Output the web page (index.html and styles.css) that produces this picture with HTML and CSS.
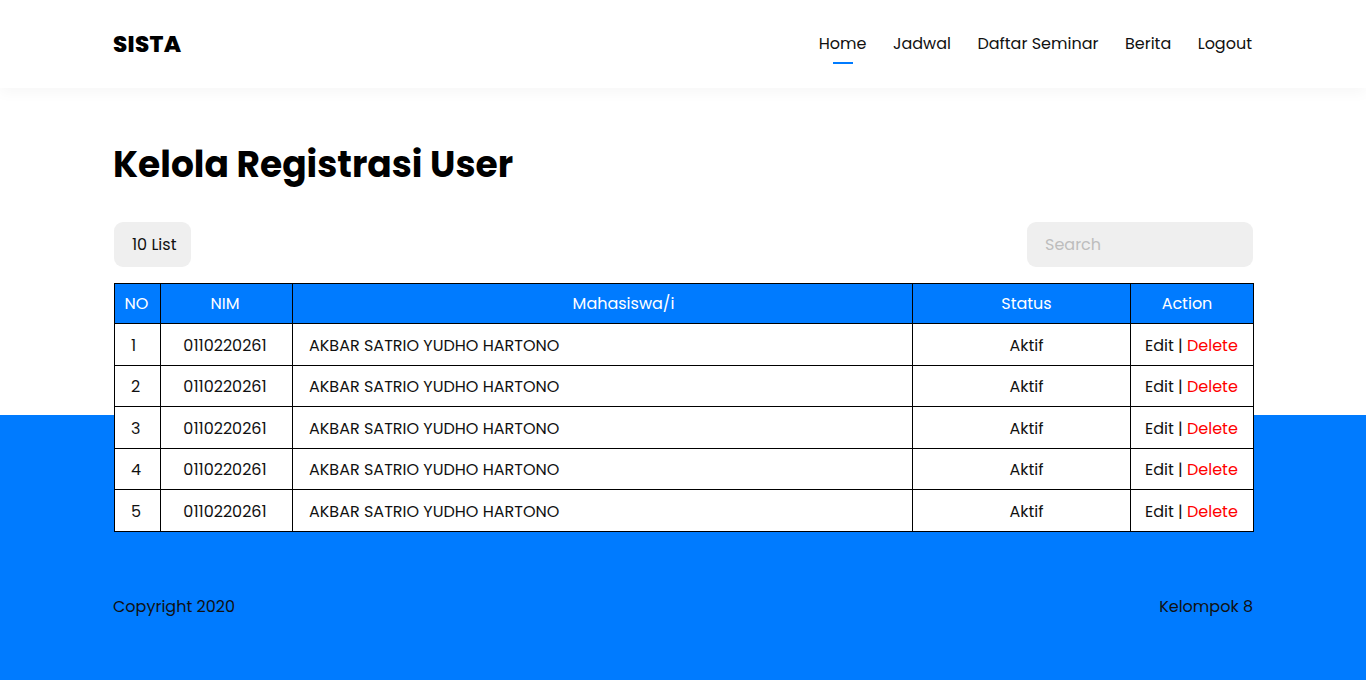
FILE: index.html
```html
<!DOCTYPE html>
<html lang="id">
<head>
<meta charset="utf-8">
<title>SISTA - Kelola Registrasi User</title>
<link rel="stylesheet" href="styles.css">
</head>
<body>
<header class="topbar">
  <div class="container topbar-inner">
    <div class="brand">SISTA</div>
    <nav class="nav">
      <a class="nav-link active" href="#">Home</a>
      <a class="nav-link" href="#">Jadwal</a>
      <a class="nav-link" href="#">Daftar Seminar</a>
      <a class="nav-link" href="#">Berita</a>
      <a class="nav-link" href="#">Logout</a>
    </nav>
  </div>
</header>
<main class="main">
  <div class="container">
    <h1 class="title">Kelola Registrasi User</h1>
    <div class="toolbar">
      <div class="list-btn">10 List</div>
      <input class="search" type="text" placeholder="Search">
    </div>
    <table class="grid">
      <colgroup>
        <col class="w-no"><col class="w-nim"><col class="w-name"><col class="w-status"><col class="w-action">
      </colgroup>
      <thead>
        <tr>
          <th class="c-no">NO</th>
          <th class="c-nim">NIM</th>
          <th class="c-name">Mahasiswa/i</th>
          <th class="c-status">Status</th>
          <th class="c-action">Action</th>
        </tr>
      </thead>
      <tbody>
        <tr><td class="c-no">1</td><td class="c-nim">0110220261</td><td class="c-name">AKBAR SATRIO YUDHO HARTONO</td><td class="c-status">Aktif</td><td class="c-action">Edit | <span class="del">Delete</span></td></tr>
        <tr><td class="c-no">2</td><td class="c-nim">0110220261</td><td class="c-name">AKBAR SATRIO YUDHO HARTONO</td><td class="c-status">Aktif</td><td class="c-action">Edit | <span class="del">Delete</span></td></tr>
        <tr><td class="c-no">3</td><td class="c-nim">0110220261</td><td class="c-name">AKBAR SATRIO YUDHO HARTONO</td><td class="c-status">Aktif</td><td class="c-action">Edit | <span class="del">Delete</span></td></tr>
        <tr><td class="c-no">4</td><td class="c-nim">0110220261</td><td class="c-name">AKBAR SATRIO YUDHO HARTONO</td><td class="c-status">Aktif</td><td class="c-action">Edit | <span class="del">Delete</span></td></tr>
        <tr><td class="c-no">5</td><td class="c-nim">0110220261</td><td class="c-name">AKBAR SATRIO YUDHO HARTONO</td><td class="c-status">Aktif</td><td class="c-action">Edit | <span class="del">Delete</span></td></tr>
      </tbody>
    </table>
    <footer class="footer">
      <span>Copyright 2020</span>
      <span>Kelompok 8</span>
    </footer>
  </div>
</main>
</body>
</html>
```

FILE: styles.css
```css
* { box-sizing: border-box; }
html, body { margin: 0; padding: 0; }
body {
  font-family: "Poppins", "Inter", "Noto Sans", sans-serif;
  color: #111;
  background: #007bff;
  height: 680px;
  overflow: hidden;
}
.container {
  width: 1140px;
  margin: 0 auto;
}
.topbar {
  background: #fff;
  height: 88px;
  box-shadow: 0 4px 14px rgba(0,0,0,0.04);
  position: relative;
  z-index: 2;
}
.topbar-inner {
  height: 88px;
  display: flex;
  align-items: center;
  justify-content: space-between;
}
.brand {
  font-size: 23px;
  font-weight: 800;
  letter-spacing: 0.3px;
  color: #000;
}
.nav {
  display: flex;
  gap: 26.5px;
  margin-right: 1px;
}
.nav-link {
  font-size: 16px;
  color: #111;
  text-decoration: none;
  position: relative;
  line-height: 24px;
}
.nav-link.active::after {
  content: "";
  position: absolute;
  left: 50%;
  margin-left: -10px;
  width: 20px;
  height: 2px;
  background: #007bff;
  top: 30px;
}
.main {
  background: linear-gradient(to bottom, #fff 0, #fff 327px, #007bff 327px);
  padding-top: 53px;
  height: 592px;
}
.title {
  margin: 0;
  font-size: 36px;
  font-weight: 700;
  line-height: 48px;
  color: #000;
}
.toolbar {
  margin-top: 33px;
  display: flex;
  justify-content: space-between;
  align-items: center;
}
.list-btn {
  margin-left: 1px;
  width: 77px;
  height: 45px;
  border-radius: 9px;
  background: #efefef;
  font-size: 16px;
  line-height: 45px;
  padding-left: 18px;
  color: #111;
  white-space: nowrap;
}
.search {
  width: 226px;
  height: 45px;
  border: none;
  border-radius: 9px;
  background: #efefef;
  padding: 0 18px;
  font-family: inherit;
  font-size: 16px;
  outline: none;
}
.search::placeholder { color: #bdbdbd; }
.grid {
  margin-top: 16px;
  margin-left: 1px;
  width: 1139px;
  table-layout: fixed;
  border-collapse: collapse;
  background: #fff;
  font-size: 16px;
}
.w-no { width: 46px; }
.w-nim { width: 132px; }
.w-name { width: 620px; }
.w-status { width: 218px; }
.w-action { width: 123px; }
.grid th, .grid td {
  border: 1px solid #000;
  height: 41.5px;
  padding: 2px 16px 0;
  font-weight: 400;
  white-space: nowrap;
}
.grid th {
  background: #007bff;
  color: #fff;
  text-align: center;
  height: 40px;
  padding-top: 0;
}
.grid td { color: #111; }
.grid td.c-no { text-align: left; }
.grid th.c-no { padding: 0 2px 0 0; }
.grid .c-nim { text-align: center; padding-left: 14px; padding-right: 17px; }
.grid th.c-name { text-align: center; padding-left: 58px; }
.grid .c-status { text-align: center; padding-left: 26px; padding-right: 16px; }
.grid th.c-action { text-align: center; padding-left: 6px; padding-right: 16px; }
.grid td.c-action { text-align: left; padding-left: 14px; padding-right: 0; }
.del { color: #ff0000; }
.footer {
  margin-top: 62px;
  display: flex;
  justify-content: space-between;
  font-size: 16px;
  color: #111;
}
```
